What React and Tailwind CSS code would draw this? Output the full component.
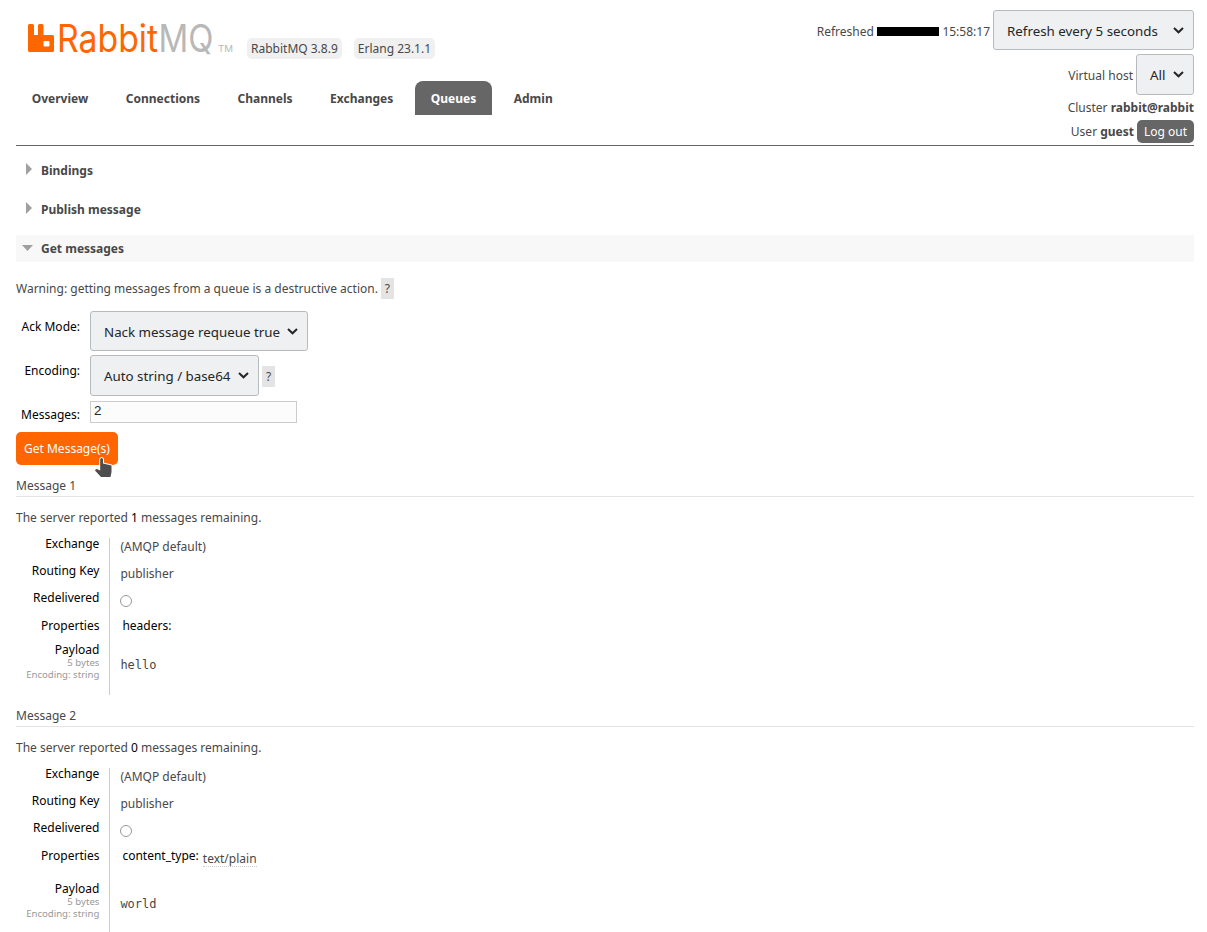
import React from "react";

const TABS = ["Overview", "Connections", "Channels", "Exchanges", "Queues", "Admin"];

function Logo() {
  return (
    <svg width="208" height="56" viewBox="0 -14 208 56" className="block">
      <path
        fill="#ff6600"
        fillRule="evenodd"
        d="M1.5 0H4.5Q6 0 6 1.5V11H10V1.5Q10 0 11.500 0H14Q15.500 0 15.500 1.500V11H24.500Q26 11 26 12.500V26.500Q26 28 24.500 28H1.500Q0 28 0 26.500V1.500Q0 0 1.500 0ZM16.500 17Q15.500 17 15.500 18V21.500Q15.500 22.500 16.500 22.500H20.500Q21.500 22.500 21.500 21.500V18Q21.500 17 20.500 17Z"
      />
      <text x="29" y="28" fill="#ff6600" fontFamily="Inter, sans-serif" fontWeight="400" fontSize="38" textLength="101" lengthAdjust="spacingAndGlyphs">Rabbit</text>
      <text x="130.500" y="28" fill="#b8b8b8" fontFamily="Inter, sans-serif" fontWeight="400" fontSize="38" textLength="55" lengthAdjust="spacingAndGlyphs">MQ</text>
      <text x="190" y="28" fill="#b8b8b8" fontFamily="Inter, sans-serif" fontSize="9.500" textLength="15" lengthAdjust="spacingAndGlyphs">TM</text>
    </svg>
  );
}

function Select({ label, className }) {
  return (
    <button className={`flex shrink-0 items-start justify-between rounded-[3px] border border-[#b8bbbe] bg-[#eff0f1] pl-[13px] pr-[9px] pt-[11px] text-[13.333px] leading-[18px] text-[#232627] ${className}`}>
      <span className="whitespace-nowrap">{label}</span>
      <svg width="11" height="7" viewBox="0 0 11 7" fill="none" stroke="#232627" strokeWidth="2" className="mt-[5px]">
        <path d="M1 1L5.500 5.300L10 1" />
      </svg>
    </button>
  );
}

function Help() {
  return <span className="h-[21px] w-[13px] bg-[#e4e4e4] text-center leading-[21px] text-[#484848]">?</span>;
}

function Section({ title, open }) {
  return (
    <h2 className={`flex h-[27px] items-center font-bold ${open ? "bg-[#f8f8f8]" : ""}`}>
      <svg width="25" height="27" viewBox="0 0 25 27" fill="#a0a0a0">
        {open ? <path d="M6 10H17L11.500 16Z" /> : <path d="M10 6V18L16 12Z" />}
      </svg>
      {title}
    </h2>
  );
}

function Message({ number, remaining, payload, contentType }) {
  return (
    <section>
      <h3 className="h-[20px] border-b border-[#e4e4e4]">Message {number}</h3>
      <p className="mt-[12px]">
        The server reported <span className="text-black">{remaining}</span> messages remaining.
      </p>
      <div className="mt-[9px] flex">
        <div className="flex w-[93px] flex-col pr-[9.600px] text-right text-black">
          <div className="h-[27px]">Exchange</div>
          <div className="h-[27px]">Routing Key</div>
          <div className="h-[28px]">Redelivered</div>
          <div className={contentType ? "h-[33px]" : "h-[24px]"}>Properties</div>
          <div>Payload</div>
          <div className="-mt-[1px] text-[9.600px] leading-[12px] text-[#999]">
            <div>5 bytes</div>
            <div>Encoding: string</div>
          </div>
        </div>
        <div className={`mt-[3px] border-l border-[#ccc] pl-[10.400px] ${contentType ? "h-[166px]" : "h-[157px]"}`}>
          <div className="h-[27px]">(AMQP default)</div>
          <div className="h-[27px]">publisher</div>
          <div className="flex h-[25px] pt-[3px]">
            <span className="size-[12px] rounded-full border border-[#999]" />
          </div>
          <div className={`flex pl-[2px] text-black ${contentType ? "h-[49px]" : "h-[40px]"}`}>
            {contentType ? "content_type:" : "headers:"}
            {contentType && (
              <span className="ml-[4px] mt-[3px] h-[17px] border-b border-dotted border-[#ccc] text-[#484848]">{contentType}</span>
            )}
          </div>
          <pre className="font-['DejaVu_Sans_Mono',monospace] text-[12px] leading-[17px]">{payload}</pre>
        </div>
      </div>
    </section>
  );
}

export default function App() {
  return (
    <div className="h-[932px] overflow-hidden bg-white pl-[16px] pr-[13px] font-['Noto_Sans',sans-serif] text-[12px] leading-[17px] text-[#484848]">
      <header className="flex h-[146px] justify-between border-b border-[#666]">
        <div>
          <div className="flex h-[81px] pl-[12px] pt-[10px]">
            <Logo />
            <span className="ml-[11px] mt-[28px] h-[21px] rounded-[5px] bg-[#f0f0f0] px-[4px] py-[2px]">RabbitMQ 3.8.9</span>
            <span className="ml-[12px] mt-[28px] h-[21px] rounded-[5px] bg-[#f0f0f0] px-[4px] py-[2px]">Erlang 23.1.1</span>
          </div>
          <nav className="flex gap-[6px]">
            {TABS.map((tab) => (
              <a
                key={tab}
                className={`h-[34px] rounded-t-[8px] px-[15.750px] pt-[9px] font-bold ${tab === "Queues" ? "bg-[#666] text-white" : ""}`}
              >
                {tab}
              </a>
            ))}
          </nav>
        </div>
        <div className="flex flex-col items-end pt-[10px]">
          <div className="flex h-[40px]">
            <span className="mt-[13px]">Refreshed</span>
            <span className="ml-[3px] mt-[17px] h-[9px] w-[62px] bg-black" />
            <span className="ml-[3.500px] mr-[3px] mt-[13px]">15:58:17</span>
            <Select label="Refresh every 5 seconds" className="h-[40px] w-[201px]" />
          </div>
          <div className="mt-[4px] flex h-[41px]">
            <span className="mr-[3px] mt-[13px]">Virtual host</span>
            <Select label="All" className="h-[41px] w-[58px]" />
          </div>
          <div className="mt-[4px]">
            Cluster <b>rabbit@rabbit</b>
          </div>
          <div className="mt-[4px] flex">
            <span className="mt-[3px]">
              User <b>guest</b>
            </span>
            <button className="ml-[3px] h-[23px] w-[57px] rounded-[5px] bg-[#666] text-white">Log out</button>
          </div>
        </div>
      </header>

      <div className="mt-[11px] flex flex-col gap-[12px]">
        <Section title="Bindings" />
        <Section title="Publish message" />
        <Section title="Get messages" open />
      </div>

      <div className="mt-[16px] flex items-center gap-[3px]">
        <span>Warning: getting messages from a queue is a destructive action.</span>
        <Help />
      </div>

      <form className="mt-[12px]" onSubmit={(e) => e.preventDefault()}>
        <div className="flex h-[44px]">
          <label className="mr-[10px] mt-[7px] w-[64px] text-right text-black">Ack Mode:</label>
          <Select label="Nack message requeue true" className="h-[40px] w-[218px]" />
        </div>
        <div className="flex h-[46px]">
          <label className="mr-[10px] mt-[7px] w-[64px] text-right text-black">Encoding:</label>
          <Select label="Auto string / base64" className="mr-[3px] h-[41px] w-[169px]" />
          <div className="mt-[11px] flex">
            <Help />
          </div>
        </div>
        <div className="flex h-[31px]">
          <label className="mr-[10px] mt-[5px] w-[64px] text-right text-black">Messages:</label>
          <input
            defaultValue="2"
            className="h-[22px] w-[207px] border border-[#ccc] bg-[#fcfcfc] pb-[3px] pl-[3px] font-['Liberation_Sans',sans-serif] text-[13.333px] text-[#232627]"
          />
        </div>
        <div className="relative flex">
          <button className="h-[33px] w-[102px] rounded-[5px] bg-[#f60] text-white">Get Message(s)</button>
          <svg
            width="24"
            height="26"
            viewBox="0 0 24 26"
            className="absolute left-[76px] top-[24px]"
            fill="#4d4d4d"
            stroke="#fff"
            strokeWidth="2"
            strokeLinejoin="round"
            paintOrder="stroke"
          >
            <path d="M8.200 3.500Q8.200 2 9.600 2Q11 2 11 3.500V7.500L19.500 9.500V16L18.500 21H9L3 14.500Q3 13 5 13L8.200 14.500Z" />
          </svg>
        </div>
      </form>

      <div className="mt-[12px]">
        <Message number={1} remaining={1} payload="hello" />
        <div className="mt-[12px]">
          <Message number={2} remaining={0} payload="world" contentType="text/plain" />
        </div>
      </div>
    </div>
  );
}
